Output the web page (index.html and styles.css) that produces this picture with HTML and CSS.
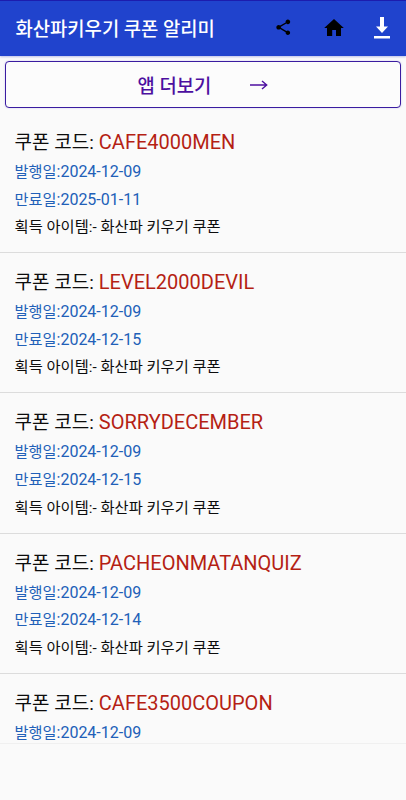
FILE: index.html
```html
<!DOCTYPE html>
<html lang="ko">
<head>
<meta charset="utf-8">
<title>화산파키우기 쿠폰 알리미</title>
<link rel="stylesheet" href="styles.css">
</head>
<body>
<header class="bar">
  <h1 class="title">화산파키우기 쿠폰 알리미</h1>
  <nav class="actions">
    <svg class="icon share" viewBox="0 0 24 24"><path d="M18 16.08c-.76 0-1.44.3-1.96.77L8.91 12.7c.05-.23.09-.46.09-.7s-.04-.47-.09-.7l7.05-4.11c.54.5 1.25.81 2.04.81 1.66 0 3-1.34 3-3s-1.34-3-3-3-3 1.34-3 3c0 .24.04.47.09.7L8.04 9.81C7.5 9.31 6.79 9 6 9c-1.66 0-3 1.34-3 3s1.34 3 3 3c.79 0 1.5-.31 2.04-.81l7.12 4.16c-.05.21-.08.43-.08.65 0 1.61 1.31 2.92 2.92 2.92s2.92-1.31 2.92-2.92-1.31-2.92-2.92-2.92z"/></svg>
    <svg class="icon home" viewBox="0 0 24 24"><path d="M10.2 20v-6h3.8v6h5v-8h2.8L12 3 2.2 12H5v8z"/></svg>
    <svg class="icon download" viewBox="0 0 16 22"><path d="M6 0h4v9.5h4L8 16 2 9.5h4zM0 19h16v2.4H0z"/></svg>
  </nav>
</header>
<a class="more"><span>앱 더보기</span><svg class="arrow" viewBox="0 0 18 10"><path d="M0 5h16.6M12 1l4.7 4L12 9"/></svg></a>
<main class="list">
  <article class="coupon">
    <h2 class="code"><span class="label">쿠폰 코드:</span> <span class="value">CAFE4000MEN</span></h2>
    <p class="date"><span class="key">발행일</span>:2024-12-09</p>
    <p class="date"><span class="key">만료일</span>:2025-01-11</p>
    <p class="item">획득 아이템:- 화산파 키우기 쿠폰</p>
  </article>
  <article class="coupon">
    <h2 class="code"><span class="label">쿠폰 코드:</span> <span class="value">LEVEL2000DEVIL</span></h2>
    <p class="date"><span class="key">발행일</span>:2024-12-09</p>
    <p class="date"><span class="key">만료일</span>:2024-12-15</p>
    <p class="item">획득 아이템:- 화산파 키우기 쿠폰</p>
  </article>
  <article class="coupon">
    <h2 class="code"><span class="label">쿠폰 코드:</span> <span class="value">SORRYDECEMBER</span></h2>
    <p class="date"><span class="key">발행일</span>:2024-12-09</p>
    <p class="date"><span class="key">만료일</span>:2024-12-15</p>
    <p class="item">획득 아이템:- 화산파 키우기 쿠폰</p>
  </article>
  <article class="coupon">
    <h2 class="code"><span class="label">쿠폰 코드:</span> <span class="value">PACHEONMATANQUIZ</span></h2>
    <p class="date"><span class="key">발행일</span>:2024-12-09</p>
    <p class="date"><span class="key">만료일</span>:2024-12-14</p>
    <p class="item">획득 아이템:- 화산파 키우기 쿠폰</p>
  </article>
  <article class="coupon">
    <h2 class="code"><span class="label">쿠폰 코드:</span> <span class="value">CAFE3500COUPON</span></h2>
    <p class="date"><span class="key">발행일</span>:2024-12-09</p>
  </article>
</main>
</body>
</html>
```
FILE: styles.css
```css
* { box-sizing: border-box; margin: 0; }
body {
  height: 800px;
  overflow: hidden;
  background: #fafafa;
  color: #0c0c0c;
  font-family: Roboto, "Noto Sans CJK KR", sans-serif;
}
.bar {
  display: flex;
  align-items: center;
  justify-content: space-between;
  height: 56px;
  padding: 0 16px 2px 15.5px;
  border-top: 1px solid #1c1cae;
  background: #2043cd;
  box-shadow: 0 1px 2px #b9bfe8;
}
.title { color: #fff; font-size: 18.8px; font-weight: 500; white-space: nowrap; }
.actions { display: flex; align-items: center; }
.icon { display: block; }
.share { width: 18.5px; height: 18.5px; margin-right: 30px; }
.home { width: 24px; height: 24px; margin-right: 28px; }
.download { width: 16px; height: 22px; fill: #fff; }
.more {
  display: flex;
  align-items: center;
  justify-content: center;
  gap: 39px;
  height: 47px;
  margin: 5px 5px 5px;
  border: 1px solid #3a1ca0;
  border-radius: 4px;
  background: #fcfcfc;
  box-shadow: 0 0 2px #c9c4ee;
  color: #4d0fa0;
  font-size: 18.8px;
  font-weight: 500;
}
.arrow { width: 18px; height: 10px; fill: none; stroke: #4d0fa0; stroke-width: 1.4; }
.list { height: 631px; overflow: hidden; border-bottom: 1px solid #f0f0f0; }
.coupon { height: 140.2px; padding: 14px 14.6px 0; border-bottom: 1px solid #dcdcdc; }
.code { height: 31px; font-size: 20px; font-weight: 400; line-height: 30px; white-space: nowrap; }
.label { font-size: 19px; }
.value { color: #b51f14; }
.date, .item { height: 27.6px; font-size: 16px; line-height: 27.6px; white-space: nowrap; }
.date { color: #2160b8; }
.key { font-size: 15.2px; }
.item { padding-top: 1px; font-size: 15.3px; }
```
